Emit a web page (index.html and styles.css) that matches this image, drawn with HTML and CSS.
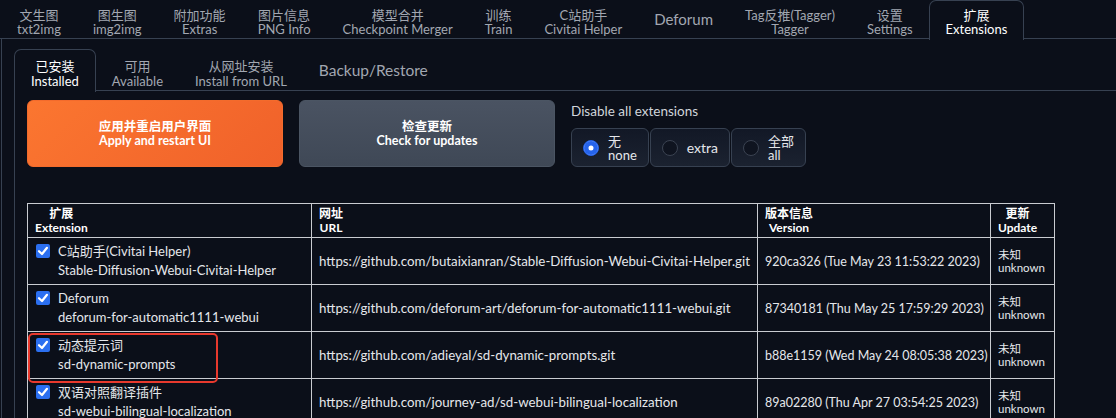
FILE: index.html
```html
<!DOCTYPE html>
<html lang="zh">
<head>
<meta charset="utf-8">
<title>Extensions</title>
<link rel="stylesheet" href="styles.css">
</head>
<body>
<div class="tabbar">
  <div class="tab"><span class="zh">文生图</span><span class="en">txt2img</span></div>
  <div class="tab"><span class="zh">图生图</span><span class="en">img2img</span></div>
  <div class="tab"><span class="zh">附加功能</span><span class="en">Extras</span></div>
  <div class="tab"><span class="zh">图片信息</span><span class="en">PNG Info</span></div>
  <div class="tab"><span class="zh">模型合并</span><span class="en">Checkpoint Merger</span></div>
  <div class="tab"><span class="zh">训练</span><span class="en">Train</span></div>
  <div class="tab"><span class="zh">C站助手</span><span class="en">Civitai Helper</span></div>
  <div class="tab single">Deforum</div>
  <div class="tab"><span class="zh">Tag反推(Tagger)</span><span class="en">Tagger</span></div>
  <div class="tab"><span class="zh">设置</span><span class="en">Settings</span></div>
  <div class="tab active"><span class="zh">扩展</span><span class="en">Extensions</span></div>
</div>
<div class="panel">
  <div class="subtabbar">
    <div class="subtab active"><span class="zh">已安装</span><span class="en">Installed</span></div>
    <div class="subtab"><span class="zh">可用</span><span class="en">Available</span></div>
    <div class="subtab"><span class="zh">从网址安装</span><span class="en">Install from URL</span></div>
    <div class="subtab single">Backup/Restore</div>
  </div>
  <div class="inner">
    <div class="actions">
      <div class="btn primary"><span>应用并重启用户界面</span><span>Apply and restart UI</span></div>
      <div class="btn secondary"><span>检查更新</span><span>Check for updates</span></div>
      <div class="radio-block">
        <div class="radio-label">Disable all extensions</div>
        <div class="radio-row">
          <div class="radio-item"><span class="dot on"></span><span class="rtext"><span>无</span><span>none</span></span></div>
          <div class="radio-item"><span class="dot"></span><span class="rtext one">extra</span></div>
          <div class="radio-item"><span class="dot"></span><span class="rtext"><span>全部</span><span>all</span></span></div>
        </div>
      </div>
    </div>
    <table class="ext">
      <colgroup><col class="c1"><col class="c2"><col class="c3"><col class="c4"></colgroup>
      <thead>
        <tr>
          <th><span class="hd"><span>扩展</span><span>Extension</span></span></th>
          <th><span class="hd"><span>网址</span><span>URL</span></span></th>
          <th><span class="hd"><span>版本信息</span><span>Version</span></span></th>
          <th><span class="hd"><span>更新</span><span>Update</span></span></th>
        </tr>
      </thead>
      <tbody>
        <tr>
          <td><div class="name"><span class="cb"><svg viewBox="0 0 14 14"><path d="M3 7.2 L6 10 L11 3.8" /></svg></span><div class="ntext"><span>C站助手(Civitai Helper)</span><span>Stable-Diffusion-Webui-Civitai-Helper</span></div></div></td>
          <td class="url">https://github.com/butaixianran/Stable-Diffusion-Webui-Civitai-Helper.git</td>
          <td class="ver">920ca326 (Tue May 23 11:53:22 2023)</td>
          <td><div class="upd"><span>未知</span><span>unknown</span></div></td>
        </tr>
        <tr>
          <td><div class="name"><span class="cb"><svg viewBox="0 0 14 14"><path d="M3 7.2 L6 10 L11 3.8" /></svg></span><div class="ntext"><span>Deforum</span><span>deforum-for-automatic1111-webui</span></div></div></td>
          <td class="url">https://github.com/deforum-art/deforum-for-automatic1111-webui.git</td>
          <td class="ver">87340181 (Thu May 25 17:59:29 2023)</td>
          <td><div class="upd"><span>未知</span><span>unknown</span></div></td>
        </tr>
        <tr>
          <td class="marked"><span class="mark"></span><div class="name"><span class="cb"><svg viewBox="0 0 14 14"><path d="M3 7.2 L6 10 L11 3.8" /></svg></span><div class="ntext"><span>动态提示词</span><span>sd-dynamic-prompts</span></div></div></td>
          <td class="url">https://github.com/adieyal/sd-dynamic-prompts.git</td>
          <td class="ver">b88e1159 (Wed May 24 08:05:38 2023)</td>
          <td><div class="upd"><span>未知</span><span>unknown</span></div></td>
        </tr>
        <tr>
          <td><div class="name"><span class="cb"><svg viewBox="0 0 14 14"><path d="M3 7.2 L6 10 L11 3.8" /></svg></span><div class="ntext"><span>双语对照翻译插件</span><span>sd-webui-bilingual-localization</span></div></div></td>
          <td class="url">https://github.com/journey-ad/sd-webui-bilingual-localization</td>
          <td class="ver">89a02280 (Thu Apr 27 03:54:25 2023)</td>
          <td><div class="upd"><span>未知</span><span>unknown</span></div></td>
        </tr>
      </tbody>
    </table>
  </div>
</div>
</body>
</html>
```
FILE: styles.css
```css
* { box-sizing: border-box; }
html, body {
  margin: 0;
  padding: 0;
  background: #0b0f19;
  overflow: hidden;
  height: 418px;
}
body {
  font-family: Lato, "Noto Sans CJK SC", sans-serif;
  color: #e5e7eb;
  font-size: 13px;
}
.tabbar {
  display: flex;
  height: 39px;
  padding-left: 1px;
  border-bottom: 1px solid #374151;
}
.tab {
  display: flex;
  flex-direction: column;
  align-items: center;
  padding: 8px 16px 0;
  color: #a2a7b1;
  font-size: 13px;
  line-height: 14px;
  white-space: nowrap;
}
.tab.single {
  justify-content: center;
  padding-top: 0;
  font-size: 15px;
}
.tab.active {
  color: #ffffff;
  border: 1px solid #374151;
  border-bottom: none;
  border-radius: 7px 7px 0 0;
  height: 40px;
  margin-bottom: -1px;
  background: #0b0f19;
  padding-top: 7px;
}
.panel {
  margin-left: 1px;
  border-left: 1px solid #374151;
  padding: 10px 0 0 12px;
  height: 400px;
}
.subtabbar {
  display: flex;
  height: 42px;
  border-bottom: 1px solid #374151;
}
.subtab {
  display: flex;
  flex-direction: column;
  align-items: center;
  padding: 10px 16px 0;
  color: #a2a7b1;
  font-size: 13px;
  line-height: 14.5px;
  white-space: nowrap;
}
.subtab.single {
  justify-content: center;
  font-size: 15.5px;
  padding-top: 2px;
}
.subtab.active {
  color: #ffffff;
  border: 1px solid #374151;
  border-bottom: none;
  border-radius: 7px 7px 0 0;
  height: 43px;
  margin-bottom: -1px;
  background: #0b0f19;
  padding-top: 9px;
}
.inner {
  border-left: 1px solid #374151;
  padding: 9px 0 0 12px;
  height: 340px;
}
.actions {
  display: flex;
  gap: 16px;
  align-items: flex-start;
}
.btn {
  width: 256px;
  height: 67px;
  border-radius: 6px;
  display: flex;
  flex-direction: column;
  align-items: center;
  justify-content: center;
  color: #ffffff;
  font-weight: 700;
  font-size: 12.5px;
  line-height: 14px;
}
.btn.primary {
  background: linear-gradient(135deg, #fb7630 0%, #f0612a 100%);
  border: 1px solid #f36b2c;
}
.btn.secondary {
  background: linear-gradient(180deg, #4a5362 0%, #3f4856 100%);
  border: 1px solid #4b5563;
}
.radio-block {
  display: flex;
  flex-direction: column;
  padding-top: 2px;
}
.radio-label {
  font-size: 13.5px;
  color: #d1d5db;
  line-height: 18px;
}
.radio-row {
  display: flex;
  gap: 1px;
  margin-top: 8px;
}
.radio-item {
  height: 39px;
  border: 1px solid #374151;
  border-radius: 6px;
  background: linear-gradient(180deg, #121826 0%, #1b2230 100%);
  display: flex;
  align-items: center;
  padding: 0 11px 0 11px;
  gap: 9px;
}
.dot {
  width: 16px;
  height: 16px;
  border-radius: 50%;
  border: 1px solid #3b4352;
  background: #0f1420;
  flex: none;
}
.dot.on {
  background: #2563eb;
  border-color: #2563eb;
  box-shadow: inset 0 0 0 4.5px #2563eb, inset 0 0 0 8px #ffffff;
}
.rtext {
  display: flex;
  flex-direction: column;
  font-size: 13px;
  line-height: 14px;
  color: #e5e7eb;
  white-space: nowrap;
}
.rtext.one { font-size: 14px; }
table.ext {
  margin-top: 36px;
  border-collapse: collapse;
  table-layout: fixed;
  width: 1027px;
  font-size: 12.5px;
  color: #e5e7eb;
}
col.c1 { width: 284px; }
col.c2 { width: 446px; }
col.c3 { width: 233px; }
col.c4 { width: 64px; }
th, td {
  border: 1px solid #c9ccd1;
  text-align: left;
  padding: 0 7px;
  white-space: nowrap;
  overflow: hidden;
}
th {
  height: 34px;
  font-weight: 700;
  font-size: 12px;
  line-height: 13.5px;
  color: #ffffff;
  vertical-align: middle;
}
.hd {
  display: inline-flex;
  flex-direction: column;
  align-items: center;
}
td {
  height: 47px;
  vertical-align: middle;
  line-height: 19px;
}
td.url { font-size: 13.3px; }
td.ver { font-size: 12.5px; }
.name {
  display: flex;
  align-items: flex-start;
  gap: 8px;
  padding-left: 1px;
}
.cb {
  width: 14px;
  height: 14px;
  border-radius: 2px;
  background: #2b6ff0;
  margin-top: 2px;
  flex: none;
}
.cb svg {
  display: block;
  width: 14px;
  height: 14px;
  fill: none;
  stroke: #ffffff;
  stroke-width: 2.2;
  stroke-linecap: round;
  stroke-linejoin: round;
}
.ntext {
  display: flex;
  flex-direction: column;
  font-size: 13px;
}
.upd {
  display: flex;
  flex-direction: column;
  font-size: 11.5px;
  line-height: 13px;
  color: #e5e7eb;
}
td.marked {
  position: relative;
  overflow: visible;
}
.mark {
  position: absolute;
  left: 0;
  top: 1px;
  width: 190px;
  height: 50px;
  border: 2px solid #e8392d;
  border-radius: 5px;
}
```
